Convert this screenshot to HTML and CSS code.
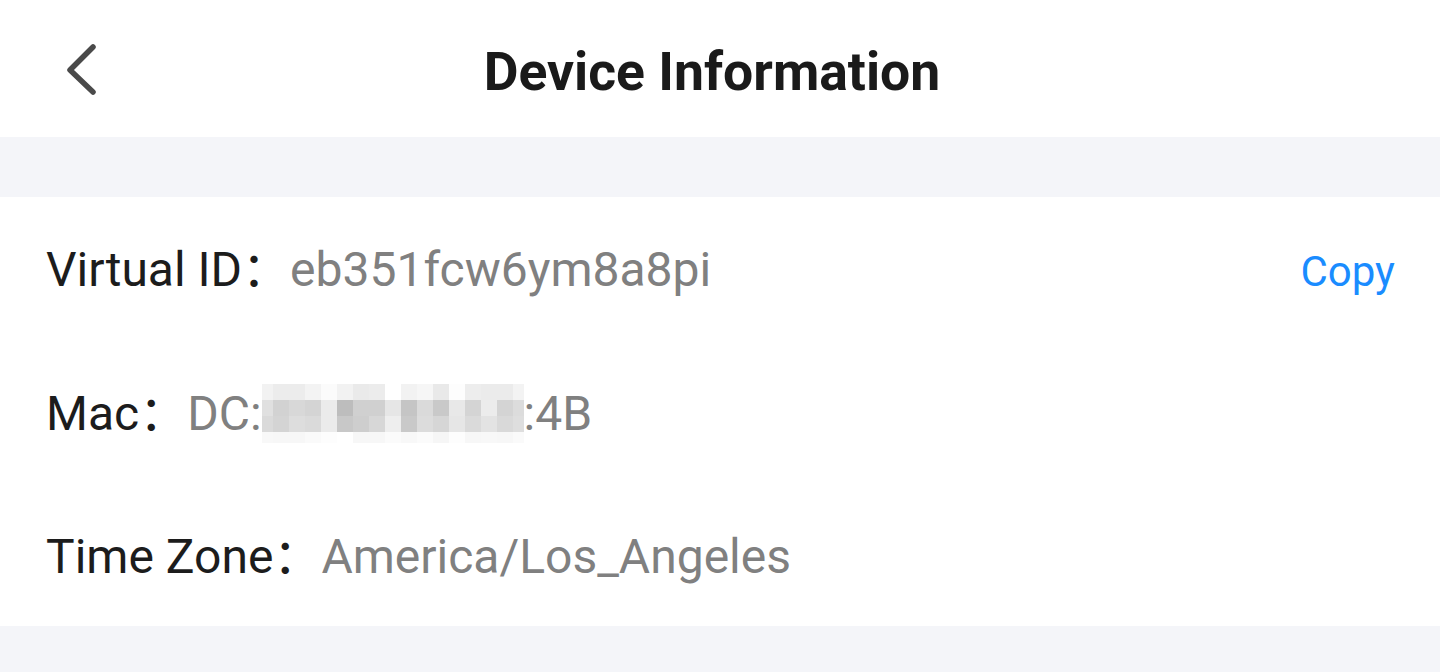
FILE: index.html
```html
<!DOCTYPE html>
<html lang="en">
<head>
<meta charset="utf-8">
<title>Device Information</title>
<link rel="stylesheet" href="styles.css">
</head>
<body>
<header class="topbar">
  <div class="back">
    <svg class="back-icon" width="40" height="60" viewBox="0 0 40 60" aria-hidden="true">
      <path d="M31 8 L8 31 L31 53" fill="none" stroke="#4a4a4a" stroke-width="5.5" stroke-linecap="round" stroke-linejoin="round"/>
    </svg>
  </div>
  <h1 class="title">Device Information</h1>
  <div class="spacer"></div>
</header>
<div class="gap"></div>
<section class="card">
  <div class="row">
    <div class="line">
      <span class="label">Virtual ID：</span><span class="value">eb351fcw6ym8a8pi</span>
      <span class="copy">Copy</span>
    </div>
  </div>
  <div class="row">
    <div class="line">
      <span class="label">Mac：</span><span class="value">DC:<svg class="mosaic" width="262" height="59" viewBox="0 0 262 59" aria-hidden="true">
        <g>
          <rect x="0" y="0" width="11" height="16" fill="#f2f2f2"/><rect x="11" y="0" width="16" height="16" fill="#ececec"/><rect x="27" y="0" width="16" height="16" fill="#ececec"/><rect x="43" y="0" width="16" height="16" fill="#f3f3f3"/><rect x="59" y="0" width="16" height="16" fill="#fbfbfb"/><rect x="75" y="0" width="16" height="16" fill="#f2f2f2"/><rect x="91" y="0" width="16" height="16" fill="#eaeaea"/><rect x="107" y="0" width="16" height="16" fill="#ececec"/><rect x="123" y="0" width="16" height="16" fill="#ffffff"/><rect x="139" y="0" width="16" height="16" fill="#f2f2f2"/><rect x="155" y="0" width="16" height="16" fill="#f6f6f6"/><rect x="171" y="0" width="16" height="16" fill="#e9e9e9"/><rect x="187" y="0" width="16" height="16" fill="#fdfdfd"/><rect x="203" y="0" width="16" height="16" fill="#ededed"/><rect x="219" y="0" width="16" height="16" fill="#ebebeb"/><rect x="235" y="0" width="16" height="16" fill="#ebebeb"/><rect x="251" y="0" width="11" height="16" fill="#f3f3f3"/>
          <rect x="0" y="16" width="11" height="16" fill="#e0e0e0"/><rect x="11" y="16" width="16" height="16" fill="#d2d2d2"/><rect x="27" y="16" width="16" height="16" fill="#d8d8d8"/><rect x="43" y="16" width="16" height="16" fill="#d4d4d4"/><rect x="59" y="16" width="16" height="16" fill="#ebebeb"/><rect x="75" y="16" width="16" height="16" fill="#bdbdbd"/><rect x="91" y="16" width="16" height="16" fill="#d0d0d0"/><rect x="107" y="16" width="16" height="16" fill="#d0d0d0"/><rect x="123" y="16" width="16" height="16" fill="#e6e6e6"/><rect x="139" y="16" width="16" height="16" fill="#c5c5c5"/><rect x="155" y="16" width="16" height="16" fill="#dadada"/><rect x="171" y="16" width="16" height="16" fill="#c9c9c9"/><rect x="187" y="16" width="16" height="16" fill="#e8e8e8"/><rect x="203" y="16" width="16" height="16" fill="#d4d4d4"/><rect x="219" y="16" width="16" height="16" fill="#ececec"/><rect x="235" y="16" width="16" height="16" fill="#d4d4d4"/><rect x="251" y="16" width="11" height="16" fill="#dcdcdc"/>
          <rect x="0" y="32" width="11" height="16" fill="#dadada"/><rect x="11" y="32" width="16" height="16" fill="#d4d4d4"/><rect x="27" y="32" width="16" height="16" fill="#dddddd"/><rect x="43" y="32" width="16" height="16" fill="#dadada"/><rect x="59" y="32" width="16" height="16" fill="#ebebeb"/><rect x="75" y="32" width="16" height="16" fill="#c8c8c8"/><rect x="91" y="32" width="16" height="16" fill="#cecece"/><rect x="107" y="32" width="16" height="16" fill="#d7d7d7"/><rect x="123" y="32" width="16" height="16" fill="#eeeeee"/><rect x="139" y="32" width="16" height="16" fill="#c9c9c9"/><rect x="155" y="32" width="16" height="16" fill="#dcdcdc"/><rect x="171" y="32" width="16" height="16" fill="#d6d6d6"/><rect x="187" y="32" width="16" height="16" fill="#e6e6e6"/><rect x="203" y="32" width="16" height="16" fill="#dadada"/><rect x="219" y="32" width="16" height="16" fill="#e3e3e3"/><rect x="235" y="32" width="16" height="16" fill="#d9d9d9"/><rect x="251" y="32" width="11" height="16" fill="#dedede"/>
          <rect x="0" y="48" width="11" height="11" fill="#f8f8f8"/><rect x="11" y="48" width="16" height="11" fill="#f7f7f7"/><rect x="27" y="48" width="16" height="11" fill="#f7f7f7"/><rect x="43" y="48" width="16" height="11" fill="#fafafa"/><rect x="59" y="48" width="16" height="11" fill="#fdfdfd"/><rect x="75" y="48" width="16" height="11" fill="#ffffff"/><rect x="91" y="48" width="16" height="11" fill="#f7f7f7"/><rect x="107" y="48" width="16" height="11" fill="#f7f7f7"/><rect x="123" y="48" width="16" height="11" fill="#fbfbfb"/><rect x="139" y="48" width="16" height="11" fill="#f8f8f8"/><rect x="155" y="48" width="16" height="11" fill="#fbfbfb"/><rect x="171" y="48" width="16" height="11" fill="#f6f6f6"/><rect x="187" y="48" width="16" height="11" fill="#fdfdfd"/><rect x="203" y="48" width="16" height="11" fill="#f7f7f7"/><rect x="219" y="48" width="16" height="11" fill="#f8f8f8"/><rect x="235" y="48" width="16" height="11" fill="#f7f7f7"/><rect x="251" y="48" width="11" height="11" fill="#fafafa"/>
        </g>
      </svg>:4B</span>
    </div>
  </div>
  <div class="row">
    <div class="line">
      <span class="label">Time Zone：</span><span class="value">America/Los_Angeles</span>
    </div>
  </div>
</section>
</body>
</html>
```
FILE: styles.css
```css
html, body {
  margin: 0;
  padding: 0;
}
body {
  background: #f4f5f9;
  font-family: Roboto, "Noto Sans CJK SC", sans-serif;
  height: 672px;
  overflow: hidden;
}
.topbar {
  height: 137px;
  box-sizing: border-box;
  padding: 6px 16px 0 0;
  background: #ffffff;
  display: grid;
  grid-template-columns: 1fr auto 1fr;
  align-items: center;
}
.back {
  padding-left: 62px;
  margin-top: -6px;
  display: flex;
  align-items: center;
}
.back-icon {
  display: block;
}
.title {
  margin: 0;
  font-size: 53.5px;
  font-weight: 700;
  color: #1a1a1a;
  line-height: 60px;
}
.gap {
  height: 60px;
}
.card {
  background: #ffffff;
}
.row {
  height: 143px;
  display: flex;
  align-items: center;
  padding: 0 45px 0 46px;
}
.line {
  flex: 1;
  display: flex;
  align-items: baseline;
  font-size: 48px;
  line-height: 60px;
  white-space: nowrap;
  padding-top: 4px;
}
.label {
  color: #1c1c1c;
}
.value {
  color: #808080;
}
.mosaic {
  vertical-align: -13px;
}
.copy {
  margin-left: auto;
  color: #1a8cff;
  font-size: 42px;
}
```
